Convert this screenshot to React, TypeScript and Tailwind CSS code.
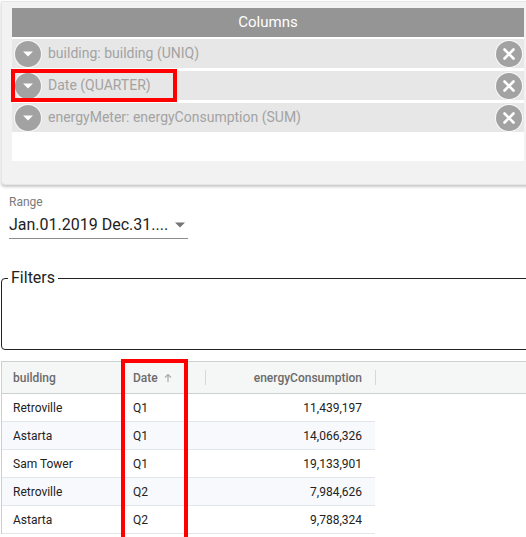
import React from "react";

const chips = [
  "building: building (UNIQ)",
  "Date (QUARTER)",
  "energyMeter: energyConsumption (SUM)",
];

const rows = [
  ["Retroville", "Q1", "11,439,197"],
  ["Astarta", "Q1", "14,066,326"],
  ["Sam Tower", "Q1", "19,133,901"],
  ["Retroville", "Q2", "7,984,626"],
  ["Astarta", "Q2", "9,788,324"],
];

function DownCircle() {
  return (
    <div className="w-[26px] h-[26px] rounded-full bg-[#a2a2a2] flex items-center justify-center shadow-[0_0_0_1px_rgba(255,255,255,0.7)]">
      <svg width="12" height="8" viewBox="0 0 12 8">
        <path d="M1 1.5 L11 1.5 L6 6.5 Z" fill="#fff" />
      </svg>
    </div>
  );
}

function XCircle() {
  return (
    <div className="w-[26px] h-[26px] rounded-full bg-[#a2a2a2] flex items-center justify-center shadow-[0_0_0_1px_rgba(255,255,255,0.7)]">
      <svg width="14" height="14" viewBox="0 0 14 14">
        <path d="M2.5 2.5 L11.5 11.5 M11.5 2.5 L2.5 11.5" stroke="#fff" strokeWidth="2.6" strokeLinecap="round" />
      </svg>
    </div>
  );
}

export default function App() {
  return (
    <div className="relative w-[526px] h-[537px] overflow-hidden bg-white font-['Roboto','Liberation_Sans',sans-serif]">
      {/* Columns panel */}
      <div className="ml-[1px] mt-[1px] w-[540px] h-[184px] bg-[#f2f2f2] rounded-bl-[4px] border border-[#e6e6e6] shadow-[0_2px_3px_rgba(0,0,0,0.22)] pl-[10px] pt-[6px]">
        <div className="w-[512px] h-[153px] bg-white">
          <div className="h-[29px] bg-[#959595] text-white text-[15px] flex items-center justify-center">
            Columns
          </div>
          <div className="flex flex-col gap-[3px] pt-[2px]">
            {chips.map((c) => (
              <div key={c} className="h-[29px] bg-[#e7e7e7] flex items-center pl-[3px] pr-[2px]">
                <DownCircle />
                <span className="ml-[7px] text-[14px] text-[#a3a3a3]">{c}</span>
                <div className="flex-1" />
                <XCircle />
              </div>
            ))}
          </div>
        </div>
      </div>

      {/* Range */}
      <div className="ml-[9px] mt-[10px] w-[179px]">
        <div className="text-[12px] text-[#7a7a7a] leading-[14px]">Range</div>
        <div className="mt-[6px] h-[24px] border-b border-[#8c8c8c] flex items-start justify-between">
          <span className="text-[16px] text-[#222] leading-[19px]">Jan.01.2019 Dec.31....</span>
          <svg width="12" height="6" viewBox="0 0 12 6" className="mt-[7px] mr-[2px]">
            <path d="M1 0.5 L11 0.5 L6 5.5 Z" fill="#757575" />
          </svg>
        </div>
      </div>

      {/* Filters */}
      <fieldset className="ml-[1px] mt-[30px] w-[560px] h-[81px] border border-[#222] rounded-tl-[4px] rounded-bl-[4px] px-[6px]">
        <legend className="px-[3px] text-[16px] text-[#222] leading-[18px]">Filters</legend>
      </fieldset>

      {/* Table */}
      <div className="ml-[1px] mt-[11px] border-l border-t border-[#cdd0d3]">
        <div className="h-[32px] bg-[#f5f6f6] border-b border-[#cdd0d3] flex items-center text-[12px] font-medium text-[#6b6b6b]">
          <div className="w-[120px] pl-[11px]">building</div>
          <div className="w-[84px] pl-[11px] flex items-center justify-between h-full">
            <span className="flex items-center gap-[6px]">
              Date
              <svg width="8" height="10" viewBox="0 0 8 10">
                <path d="M4 9 L4 1.5 M1 4.5 L4 1.5 L7 4.5" stroke="#aaa" strokeWidth="1.2" fill="none" />
              </svg>
            </span>
            <div className="w-px h-[15px] bg-[#d5d8db]" />
          </div>
          <div className="w-[169px] pr-[13px] text-right">energyConsumption</div>
          <div className="w-px h-[15px] bg-[#d5d8db]" />
        </div>
        {rows.map((r, i) => (
          <div
            key={i}
            className={`w-[373px] h-[28px] flex items-center border-b border-[#e2e5ea] text-[12px] text-[#222] ${i % 2 === 1 ? "bg-[#f8f9fc]" : "bg-white"}`}
          >
            <div className="w-[120px] pl-[11px]">{r[0]}</div>
            <div className="w-[84px] pl-[11px]">{r[1]}</div>
            <div className="w-[169px] pr-[13px] text-right">{r[2]}</div>
          </div>
        ))}
      </div>

      {/* Annotation overlays */}
      <div className="absolute left-[11px] top-[69px] w-[166px] h-[33px] border-[4px] border-[#ff0000]" />
      <div className="absolute left-[121px] top-[359px] w-[67px] h-[182px] border-[4px] border-[#ff0000]" />
    </div>
  );
}
